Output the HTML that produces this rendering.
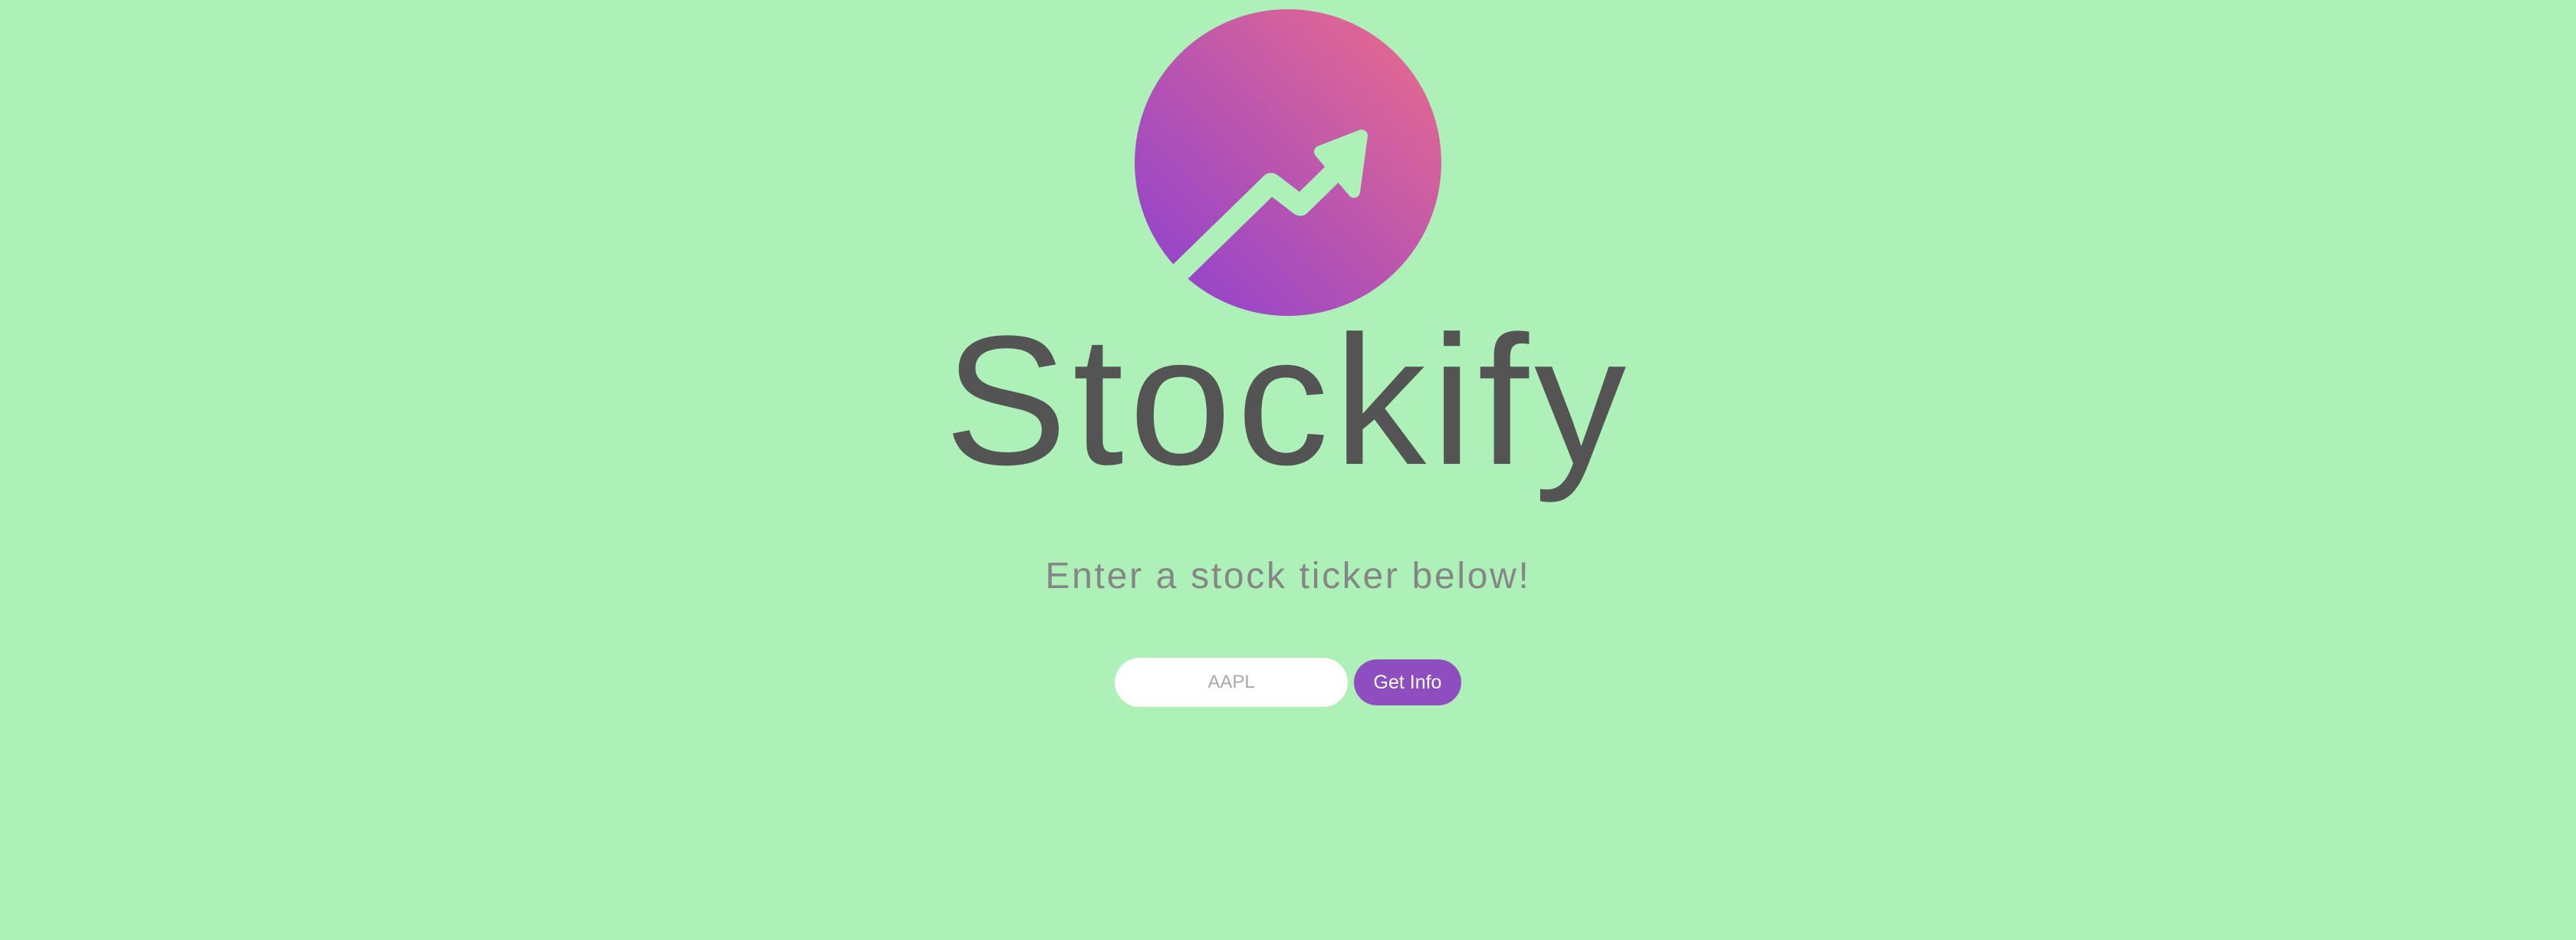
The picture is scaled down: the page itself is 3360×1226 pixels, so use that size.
<!DOCTYPE html>
<html><head><meta charset="utf-8"><style>
html,body{margin:0;padding:0;width:3360px;height:1226px;background:#adf0b8;overflow:hidden;font-family:"Liberation Sans",sans-serif}
.t{position:absolute;left:0;width:3360px;text-align:center;white-space:nowrap}
#title{top:384px;font-size:240px;line-height:276px;color:#545454;letter-spacing:7px}
#sub{top:722px;font-size:48px;line-height:60px;color:#868686;letter-spacing:2.7px}
#inp{position:absolute;left:1454px;top:858px;width:304px;height:64px;border-radius:32px;background:#fff;color:#aaa;font-size:24px;line-height:64px;text-align:center}
#btn{position:absolute;left:1766px;top:860px;width:140px;height:60px;border-radius:30px;background:#8f4ebf;color:#fff;font-size:25px;line-height:60px;text-align:center}
</style></head><body>
<svg width="3360" height="1226" style="position:absolute;left:0;top:0">
<defs><linearGradient id="g" x1="0" y1="1" x2="1" y2="0">
<stop offset="0" stop-color="#8a3fd2"/><stop offset="1" stop-color="#ed6d8a"/></linearGradient></defs>
<circle cx="1680" cy="212" r="200" fill="url(#g)"/>
<polyline points="1500,393 1658,239 1696,268 1745,220" fill="none" stroke="#adf0b8" stroke-width="27" stroke-linejoin="round"/>
<polygon points="1776,177 1722,198 1766,250" fill="#adf0b8" stroke="#adf0b8" stroke-width="16" stroke-linejoin="round"/>
</svg>
<div class="t" id="title">Stockify</div>
<div class="t" id="sub">Enter a stock ticker below!</div>
<div id="inp">AAPL</div>
<div id="btn">Get Info</div>
</body></html>
